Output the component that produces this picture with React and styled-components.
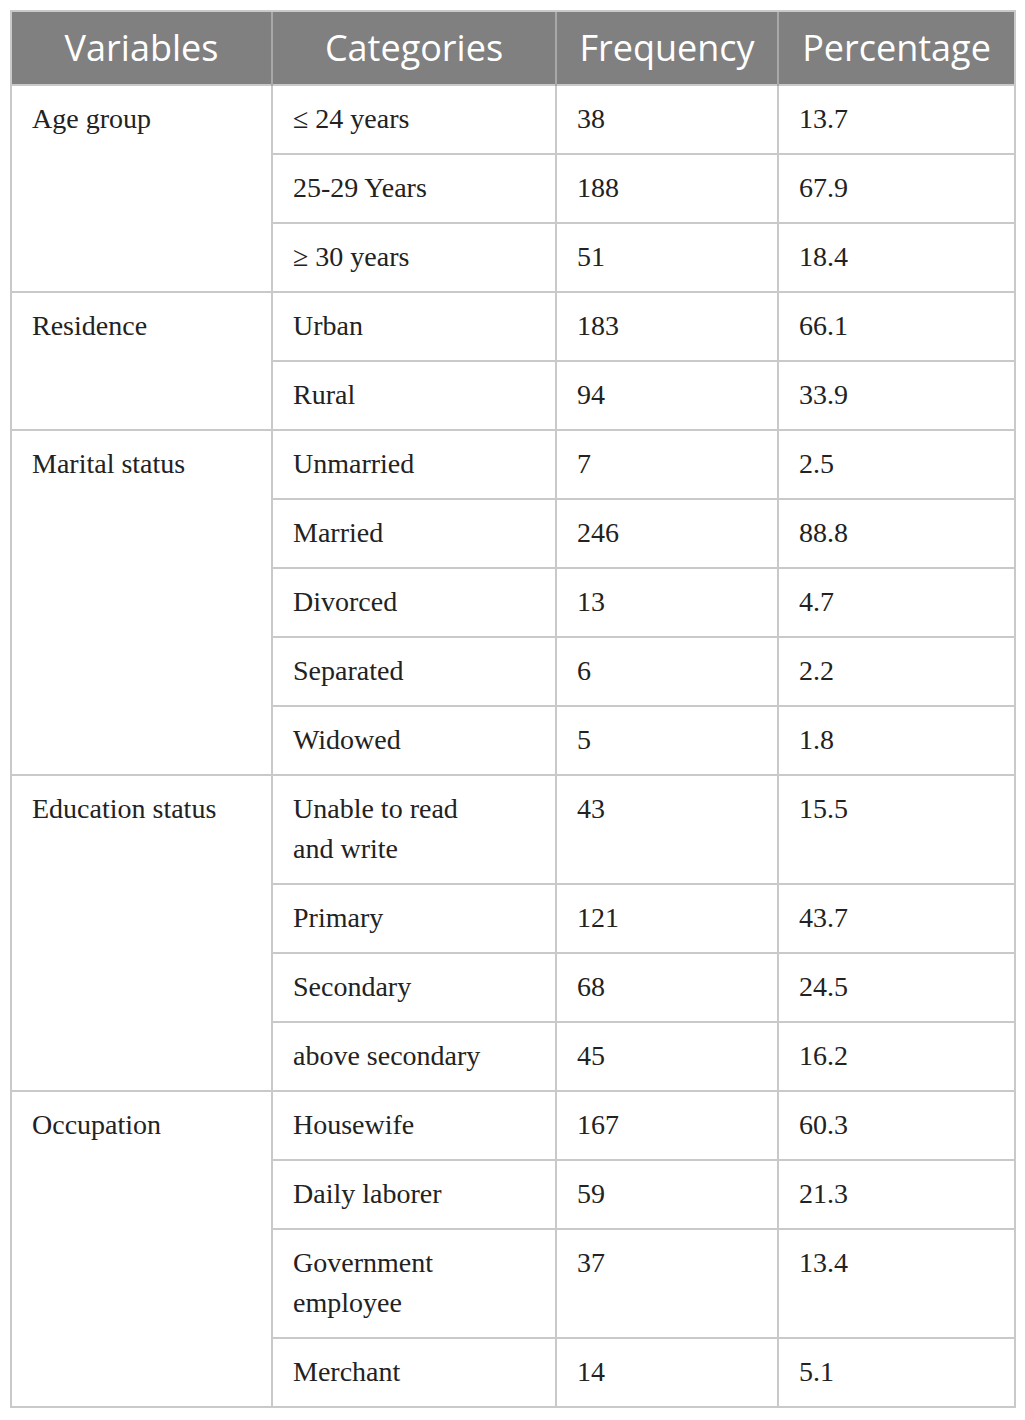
import React from "react";
import styled, { createGlobalStyle } from "styled-components";

const Global = createGlobalStyle`
  html, body { margin: 0; padding: 0; background: #fff; }
`;

const Wrap = styled.div`
  padding: 10px 11px 10px 10px;
`;

const Table = styled.table`
  width: 1004px;
  border-collapse: collapse;
  table-layout: fixed;
  border: 2px solid #c9c9c9;
`;

const HeadCell = styled.th`
  background: #808080;
  color: #fff;
  font-family: "Open Sans", "Noto Sans", sans-serif;
  font-weight: 400;
  font-size: 36px;
  line-height: 40px;
  height: 72px;
  padding: 0 6px;
  text-align: center;
  white-space: nowrap;
  border-left: 2px solid #a8a8a8;
  border-top: 2px solid #c9c9c9;
  &:first-child { border-left: 2px solid #c9c9c9; }
`;

const Cell = styled.td`
  font-family: "Liberation Serif", "Times New Roman", serif;
  font-size: 28px;
  line-height: 40px;
  color: #222;
  padding: 13px 20px 14px 20px;
  vertical-align: top;
  border: 2px solid #c9c9c9;
`;

const data = [
  ["Age group", [["≤ 24 years", 38, "13.7"], ["25-29 Years", 188, "67.9"], ["≥ 30 years", 51, "18.4"]]],
  ["Residence", [["Urban", 183, "66.1"], ["Rural", 94, "33.9"]]],
  ["Marital status", [["Unmarried", 7, "2.5"], ["Married", 246, "88.8"], ["Divorced", 13, "4.7"], ["Separated", 6, "2.2"], ["Widowed", 5, "1.8"]]],
  ["Education status", [[<>Unable to read<br />and write</>, 43, "15.5"], ["Primary", 121, "43.7"], ["Secondary", 68, "24.5"], ["above secondary", 45, "16.2"]]],
  ["Occupation", [["Housewife", 167, "60.3"], ["Daily laborer", 59, "21.3"], [<>Government<br />employee</>, 37, "13.4"], ["Merchant", 14, "5.1"]]],
];

export default function App() {
  return (
    <Wrap>
      <Global />
      <Table>
        <colgroup>
          <col style={{ width: 261 }} />
          <col style={{ width: 284 }} />
          <col style={{ width: 222 }} />
          <col style={{ width: 237 }} />
        </colgroup>
        <thead>
          <tr>
            <HeadCell>Variables</HeadCell>
            <HeadCell>Categories</HeadCell>
            <HeadCell>Frequency</HeadCell>
            <HeadCell>Percentage</HeadCell>
          </tr>
        </thead>
        <tbody>
          {data.map(([v, rows]) =>
            rows.map((r, i) => (
              <tr key={v + i}>
                {i === 0 && <Cell rowSpan={rows.length}>{v}</Cell>}
                <Cell>{r[0]}</Cell>
                <Cell>{r[1]}</Cell>
                <Cell>{r[2]}</Cell>
              </tr>
            ))
          )}
        </tbody>
      </Table>
    </Wrap>
  );
}
